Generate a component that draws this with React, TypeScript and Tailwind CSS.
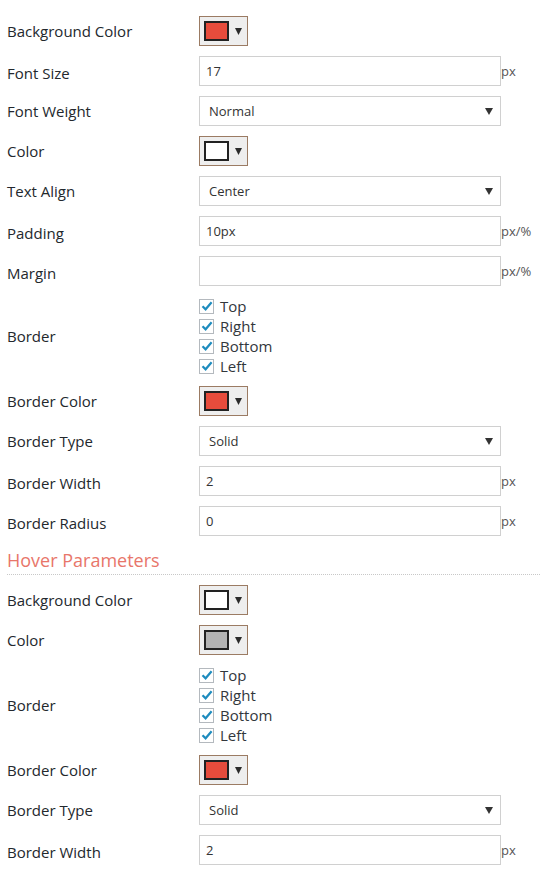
import React from 'react';

const FONT = { fontFamily: '"Open Sans", "Noto Sans", sans-serif' };

function Label({ children, input }: { children: React.ReactNode; input?: boolean }) {
  return (
    <div className={`w-[192px] shrink-0 text-[15px] text-[#23282d] ${input ? 'pt-[4px]' : ''}`}>{children}</div>
  );
}

function ColorPicker({ color }: { color: string }) {
  return (
    <div className="flex h-[30px] w-[49px] items-center border border-[#9b7b63] bg-[#eeeeee] pl-[4px]">
      <div className="h-[20px] w-[25px] border-2 border-[#222]" style={{ background: color }} />
      <svg width="7" height="8" viewBox="0 0 7 8" className="ml-[6px]">
        <path d="M0 1 L7 1 L3.5 8 Z" fill="#2b2b2b" />
      </svg>
    </div>
  );
}

function TextInput({ value, unit }: { value: string; unit: string }) {
  return (
    <div className="flex items-center">
      <div className="flex h-[30px] w-[302px] items-center border border-[#d0d0d0] bg-white pl-[6px] pt-[2px] text-[13px] text-[#333]">
        {value}
      </div>
      <span className="pt-[2px] text-[13px] text-[#555]">{unit}</span>
    </div>
  );
}

function Select({ value }: { value: string }) {
  return (
    <div className="flex h-[30px] w-[302px] items-center justify-between border border-[#d0d0d0] bg-white pl-[9px] pr-[7px] text-[13px] text-[#333]">
      <span className="pt-[2px]">{value}</span>
      <svg width="8" height="7" viewBox="0 0 8 7">
        <path d="M0 0 L8 0 L4 7 Z" fill="#333" />
      </svg>
    </div>
  );
}

function Checks() {
  return (
    <div className="flex flex-col">
      {['Top', 'Right', 'Bottom', 'Left'].map((s) => (
        <div key={s} className="flex h-[20px] items-center">
          <div className="flex h-[15px] w-[15px] items-center justify-center border border-[#b4b9be] bg-white">
            <svg width="12" height="12" viewBox="0 0 12 12">
              <path d="M1.5 6.2 L4.6 9.3 L10.6 2.3" fill="none" stroke="#1e8cbe" strokeWidth="2.2" />
            </svg>
          </div>
          <span className="ml-[6px] text-[15px] text-[#32373c]">{s}</span>
        </div>
      ))}
    </div>
  );
}

type RowDef =
  | { label: string; kind: 'color'; color: string }
  | { label: string; kind: 'input'; value: string; unit: string }
  | { label: string; kind: 'select'; value: string }
  | { label: string; kind: 'checks' };

function Row({ r }: { r: RowDef }) {
  return (
    <div className="flex items-center">
      <Label input={r.kind === 'input'}>{r.label}</Label>
      {r.kind === 'color' && <ColorPicker color={r.color} />}
      {r.kind === 'input' && <TextInput value={r.value} unit={r.unit} />}
      {r.kind === 'select' && <Select value={r.value} />}
      {r.kind === 'checks' && <Checks />}
    </div>
  );
}

const MAIN: RowDef[] = [
  { label: 'Background Color', kind: 'color', color: '#e74c3c' },
  { label: 'Font Size', kind: 'input', value: '17', unit: 'px' },
  { label: 'Font Weight', kind: 'select', value: 'Normal' },
  { label: 'Color', kind: 'color', color: '#ffffff' },
  { label: 'Text Align', kind: 'select', value: 'Center' },
  { label: 'Padding', kind: 'input', value: '10px', unit: 'px/%' },
  { label: 'Margin', kind: 'input', value: '', unit: 'px/%' },
  { label: 'Border', kind: 'checks' },
  { label: 'Border Color', kind: 'color', color: '#e74c3c' },
  { label: 'Border Type', kind: 'select', value: 'Solid' },
  { label: 'Border Width', kind: 'input', value: '2', unit: 'px' },
  { label: 'Border Radius', kind: 'input', value: '0', unit: 'px' },
];

const HOVER: RowDef[] = [
  { label: 'Background Color', kind: 'color', color: '#ffffff' },
  { label: 'Color', kind: 'color', color: '#b3b3b3' },
  { label: 'Border', kind: 'checks' },
  { label: 'Border Color', kind: 'color', color: '#e74c3c' },
  { label: 'Border Type', kind: 'select', value: 'Solid' },
  { label: 'Border Width', kind: 'input', value: '2', unit: 'px' },
];

export default function App() {
  return (
    <div className="min-h-[875px] w-[540px] bg-white pl-[7px] pt-[16px]" style={FONT}>
      <div className="flex flex-col gap-[10px]">
        {MAIN.map((r, i) => (
          <Row key={i} r={r} />
        ))}
        <div className="h-[29px] border-b border-dotted border-[#c8c8c8] pt-[1px] text-[18px] leading-[26px] text-[#e8766a]">
          Hover Parameters
        </div>
        {HOVER.map((r, i) => (
          <Row key={i} r={r} />
        ))}
      </div>
    </div>
  );
}
